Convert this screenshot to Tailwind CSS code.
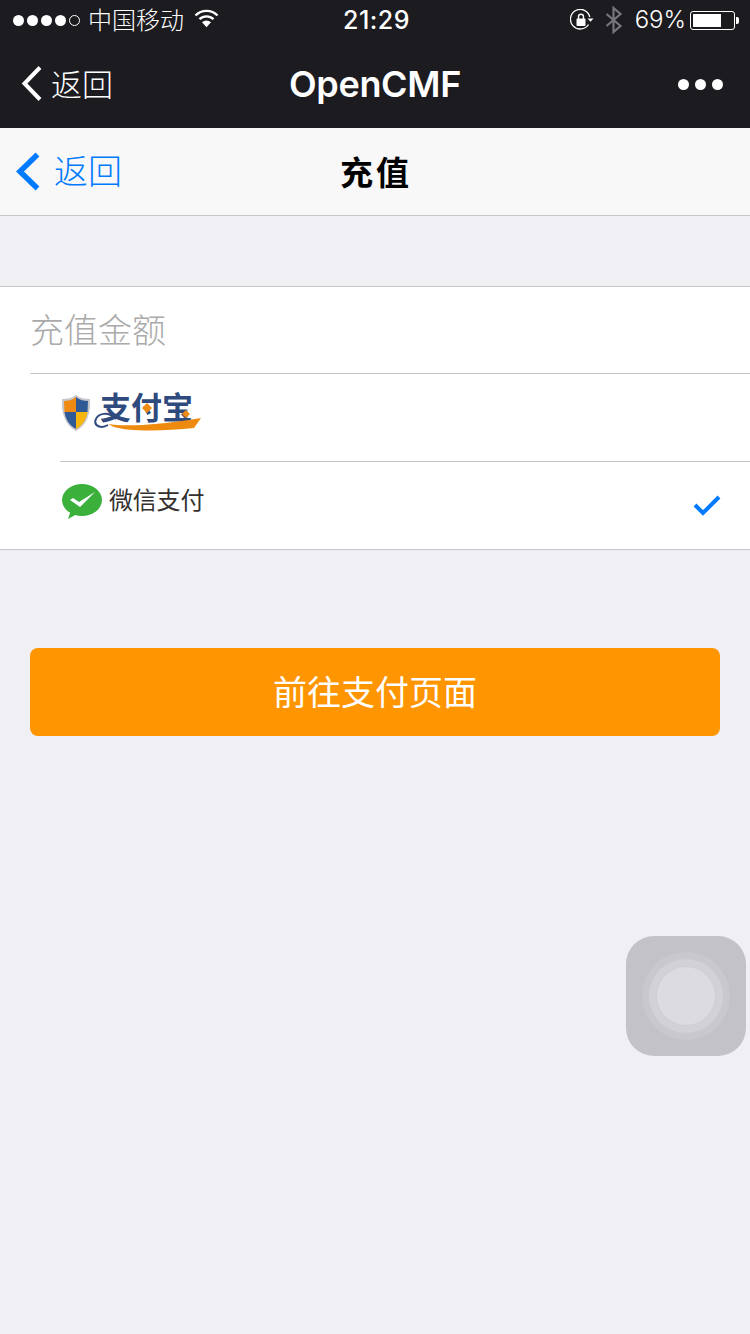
<!DOCTYPE html>
<html lang="zh">
<head>
<meta charset="utf-8">
<script src="https://cdn.jsdelivr.net/npm/@tailwindcss/browser@4"></script>
</head>
<body class="m-0">
<div class="relative w-[750px] h-[1334px] overflow-hidden bg-[#efeff4] font-['Inter','Noto_Sans_CJK_SC',sans-serif]">
  <!-- WeChat chrome -->
  <div class="h-[128px] bg-[#1b1b20] text-white flex flex-col">
    <div class="h-[40px] relative flex items-center justify-between pl-[13px] pr-[11px]">
      <div class="flex items-center">
        <div class="flex gap-[3px] items-center">
          <span class="w-[11px] h-[11px] rounded-full bg-white"></span>
          <span class="w-[11px] h-[11px] rounded-full bg-white"></span>
          <span class="w-[11px] h-[11px] rounded-full bg-white"></span>
          <span class="w-[11px] h-[11px] rounded-full bg-white"></span>
          <span class="w-[11px] h-[11px] rounded-full border border-white"></span>
        </div>
        <span class="ml-[8px] mt-[1px] text-[24px] leading-[40px] font-light">中国移动</span>
        <svg class="ml-[10px] mt-[-3px]" width="25" height="19" viewBox="0 0 25 19"><path d="M1.500 6.500a15.500 15.500 0 0 1 22 0" fill="none" stroke="#fff" stroke-width="2.400"/><path d="M5.500 10.200a10 10 0 0 1 14 0" fill="none" stroke="#fff" stroke-width="2.400"/><path d="M8 13.200a6.500 6.500 0 0 1 9 0l-4.500 5z" fill="#fff"/></svg>
      </div>
      <span class="absolute left-[3px] right-0 text-center text-[25px] leading-[40px] font-medium tracking-[0.5px]">21:29</span>
      <div class="relative flex items-center">
        <svg width="24" height="22" viewBox="0 0 24 22"><path d="M18.500 15.500A9.800 9.800 0 1 1 19.800 8" fill="none" stroke="#fff" stroke-width="1.300"/><path d="M17.500 9.500h6l-3 3.200z" fill="#fff"/><rect x="6.500" y="9.500" width="9" height="7.500" rx="1" fill="#fff"/><path d="M8.500 10V7.800a2.500 2.500 0 0 1 5 0V10" fill="none" stroke="#fff" stroke-width="1.400"/></svg>
        <svg class="ml-[10px]" width="20" height="28" viewBox="0 0 20 28"><path d="M2.500 8l14 12-7 6V2l7 6-14 12" fill="none" stroke="#77777b" stroke-width="2.200"/></svg>
        <span class="ml-[11px] text-[24px] leading-[40px] font-light">69%</span>
        <div class="ml-[4px] w-[45px] h-[19px] rounded-[3px] border border-white p-[2px] flex">
          <div class="w-[28px] bg-white"></div>
        </div>
        <div class="ml-[1px] w-[3px] h-[7px] rounded-r-[2px] bg-white"></div>
      </div>
    </div>
    <div class="h-[88px] relative flex items-center justify-between pl-[21px] pr-[27px]">
      <div class="flex items-center">
        <svg width="22" height="38" viewBox="0 0 22 38"><path d="M19 2.500 3.500 18.500 19 34.500" fill="none" stroke="#fff" stroke-width="4"/></svg>
        <span class="ml-[8px] mt-[2px] text-[31px] leading-[40px] font-light">返回</span>
      </div>
      <span class="absolute left-0 right-0 text-center text-[36px] leading-[44px] font-semibold tracking-[-0.3px]">OpenCMF</span>
      <div class="flex gap-[6px]">
        <span class="w-[11px] h-[11px] rounded-full bg-white"></span>
        <span class="w-[11px] h-[11px] rounded-full bg-white"></span>
        <span class="w-[11px] h-[11px] rounded-full bg-white"></span>
      </div>
    </div>
  </div>

  <!-- Page nav -->
  <div class="h-[88px] relative bg-[#f8f8f8] border-b border-[#c8c7cc] flex items-center pl-[15px]">
    <svg width="26" height="42" viewBox="0 0 26 42"><path d="M22.500 3.500 5 20.500l17.500 17" fill="none" stroke="#007aff" stroke-width="5.500"/></svg>
    <span class="ml-[13px] mt-[1px] text-[34px] leading-[44px] text-[#007aff] font-light">返回</span>
    <span class="absolute left-[2px] right-0 top-[23px] text-center text-[33px] leading-[44px] font-bold text-black tracking-[3px]">充值</span>
  </div>

  <!-- Form list -->
  <div class="mt-[70px] bg-white border-y border-[#c8c7cc]">
    <div class="ml-[30px] h-[87px] border-b border-[#c8c7cc] flex items-center">
      <span class="mt-[2px] text-[34px] leading-[44px] text-[#aaaaaa] font-light">充值金额</span>
    </div>
    <div class="ml-[60px] h-[88px] border-b border-[#c8c7cc] relative">
      <div class="h-[78px] flex items-center">
        <svg width="32" height="38" viewBox="0 0 32 38" class="mt-[-1px]">
          <path d="M16 1C12 4 7 5 2 5c-1 14 3 26 14 32C27 31 31 19 30 5c-5 0-10-1-14-4z" fill="#c8c8cc"/>
          <path d="M16 3C12 6 8 7 4 7l.5 11H16z" fill="#ef8a12"/>
          <path d="M16 3c4 3 8 4 12 4l-.5 11H16z" fill="#2f5a96"/>
          <path d="M4.500 18H16v17C9 31 5.500 25 4.500 18z" fill="#2f5a96"/>
          <path d="M27.500 18H16v17c7-4 10.500-10 11.500-17z" fill="#f6b60f"/>
        </svg>
        <div class="relative ml-[2px] w-[108px] h-[38px]">
          <span class="absolute left-[6px] top-[-1px] text-[31px] leading-[30px] font-bold text-[#2f4a7d] whitespace-nowrap">支付宝</span>
          <svg class="absolute left-0 top-0" width="108" height="38" viewBox="0 0 108 38">
            <path d="M22 25C14 17 4 19 1.500 26 0 32 7 35 14 31" fill="none" stroke="#2f4a7d" stroke-width="2"/>
            <path d="M14 30C30 33 66 31 107 24L100 34C72 37 36 38 20 33z" fill="#ee8b0f"/>
            <path d="M48 14l5-5 5 5-5 5z" fill="#ef8a12"/>
            <path d="M88 20l4-4 4 4-4 4z" fill="#ef8a12"/>
          </svg>
        </div>
      </div>
    </div>
    <div class="ml-[60px] h-[87px] relative">
      <div class="h-[78px] flex items-center">
        <svg width="42" height="36" viewBox="0 0 42 36" class="ml-[1px] mt-[1px]">
          <ellipse cx="21" cy="16" rx="20" ry="16" fill="#3bb13c"/>
          <path d="M10 26 7 35l11-6z" fill="#3bb13c"/>
          <path d="M9 16l3-2 6 4L34 8 19 23z" fill="#fff"/>
        </svg>
        <span class="ml-[6px] text-[24px] leading-[32px] text-[#33302e] tracking-[-0.2px]">微信支付</span>
      </div>
      <svg class="absolute right-[29px] top-[32px]" width="28" height="22" viewBox="0 0 28 22"><path d="M2 11l8 8L26 3" fill="none" stroke="#007aff" stroke-width="4"/></svg>
    </div>
  </div>

  <!-- Button -->
  <div class="mx-[30px] mt-[98px] h-[88px] rounded-[8px] bg-[#ff9500] flex items-center justify-center text-white text-[34px]">前往支付页面</div>

  <!-- Assistive touch -->
  <div class="absolute left-[626px] top-[936px] w-[120px] h-[120px] rounded-[28px] bg-[#c3c2c7] flex items-center justify-center">
    <div class="w-[88px] h-[88px] rounded-full bg-[#c9c8cc] flex items-center justify-center">
      <div class="w-[74px] h-[74px] rounded-full bg-[#d2d1d5] flex items-center justify-center">
        <div class="w-[60px] h-[60px] rounded-full bg-[#dcdbdf] border border-[#cfced2]"></div>
      </div>
    </div>
  </div>
</div>
</body>
</html>
